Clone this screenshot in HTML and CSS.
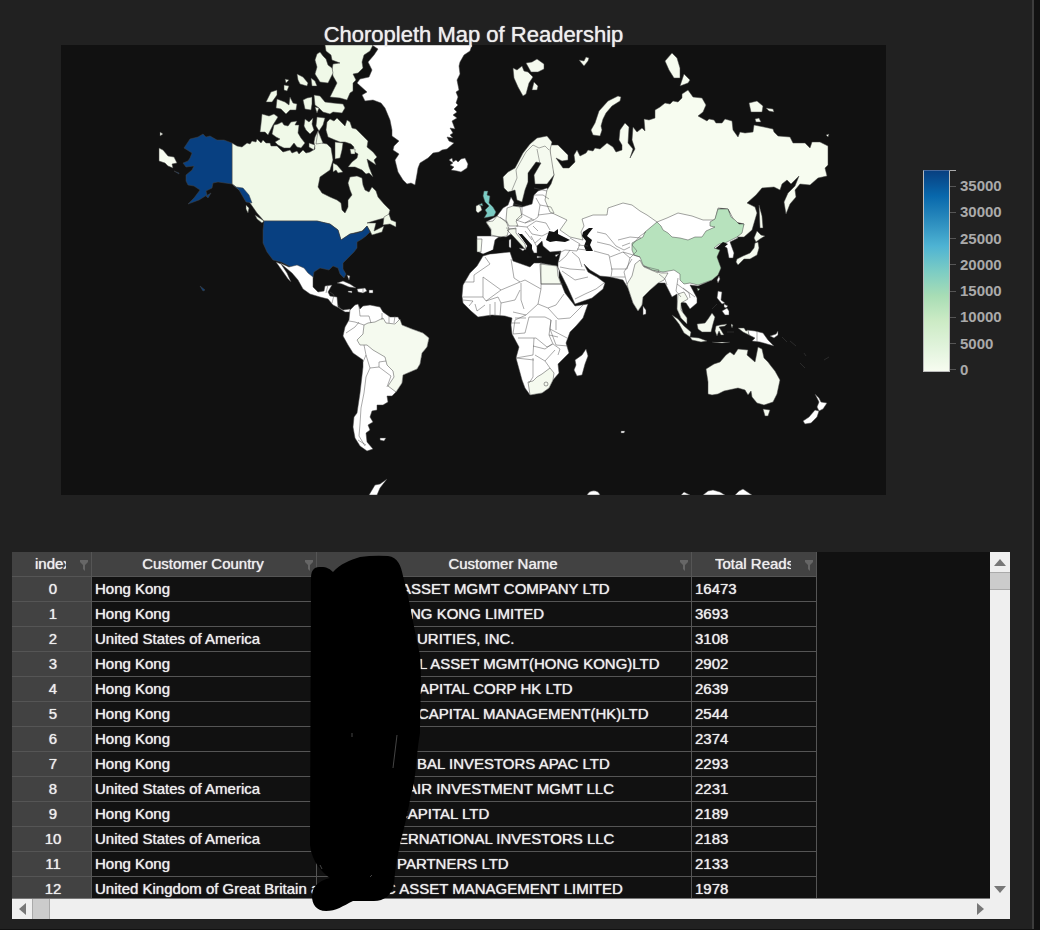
FILE: index.html
```html
<!DOCTYPE html>
<html lang="en">
<head>
<meta charset="utf-8">
<title>Readership</title>
<link rel="stylesheet" href="styles.css">
</head>
<body>
<main class="panel">
<section class="chart">
<div class="plot">
<h1 class="title">Choropleth Map of Readership</h1>
<svg class="map" viewBox="61 45 825 450" role="img" aria-label="World map of readership by country">
<g class="canada">
<path d="M232 143L237 146 242 147 247 143 250 144 252 141 256 142 257 139 261 143 263 140 266 143 270 143 271 146 277 146 283 152 290 150 292 153 297 151 299 154 303 150 306 153 310 152 315 149 314 142 315 137 318 131 320 136 322 143 327 144 331 148 333 160 330 170 320 177 318 187 322 193 330 197 337 200 341 203 342 210 345 213 348 207 348 200 352 195 350 190 348 183 350 177 357 176 362 178 363 185 365 190 369 192 372 187 376 191 378 197 384 204 390 210 388 217 377 220 367 223 376 223 374 231 384 226 382 232 372 235 370 231 367 226 362 231 350 234 341 240 338 230 330 224 317 221 264 221 257 213 250 203 243 193 232 184Z"/>
<path d="M325 45H373L370 51 364 55 362 62 363 68 358 73 353 74 356 80 353 83 353 91 350 93 347 100 340 98 330 97 333 91 337 83 333 76 332 70 333 64 340 63 332 60 331 55 326 51Z"/>
<path d="M320 52L317 54 315 60 317 67 315 74 320 82 328 83 333 73 332 68 328 65 326 59 323 56Z"/>
<path d="M314 95L320 96 325 102 333 103 343 104 345 108 342 113 333 112 330 114 323 112 319 108 315 105Z"/>
<path d="M327 122L330 119 334 121 337 118 340 121 345 126 347 120 350 122 352 128 356 129 360 133 363 136 368 141 367 147 373 152 377 157 374 160 376 165 370 161 367 159 369 167 373 177 369 173 366 174 362 170 355 167 348 167 352 162 357 158 358 154 353 151 354 147 351 144 345 142 340 142 335 140 328 137 326 130Z"/>
<path d="M274 125L278 124 282 122 284 125 288 126 291 122 297 121 295 125 299 125 298 133 301 138 305 143 301 148 297 147 294 143 290 148 284 148 278 145 275 142 280 139 276 137 272 134Z"/>
<path d="M262 114L269 116 274 114 278 117 273 125 268 135 265 132 260 132 261 124Z"/>
<path d="M277 90L271 92 266 102 272 102 277 95ZM277 99L285 102 289 105 290 97 293 103 297 104 296 110 290 110 286 114 281 109 276 108Z"/>
<path d="M297 74L303 77 308 83 307 86 300 84 298 80ZM311 78L315 81 317 86 312 86ZM303 100L307 98 312 97 312 104 311 110 305 109ZM315 107L319 108 317 113ZM305 119L309 122 313 118 312 124 314 130 310 134 306 130 304 126ZM317 117L325 118 323 125 319 131 316 126ZM318 131L323 143 316 144ZM335 142L343 143 342 150 340 158 335 159ZM309 143L315 145 314 150 309 147ZM284 85L289 86 287 91 284 90ZM285 79L289 80 286 83ZM333 163L337 165 343 172 338 173 336 170 333 172ZM350 149L355 149 355 154 351 154ZM384 217L389 214 391 220 396 222 396 227 390 224 383 225Z"/>
<path d="M246 205L249 208 248 213 246 209ZM255 215L264 221 262 223 257 219Z"/>
</g>
<g class="usa">
<path d="M264 221L317 221 330 224 338 230 341 240 350 234 357 233 363 231 367 226 370 232 366 236 362 239 357 242 357 248 354 252 348 258 343 263 343 269 346 274 344 278 340 274 338 268 333 266 329 270 320 268 314 272 313 278 307 273 301 267 293 268 281 262 273 260 267 252 263 243 263 230Z"/>
<path d="M232 143L224 140 217 140 210 136 206 137 203 134 198 137 190 139 184 148 192 153 190 158 188 161 183 163 186 167 194 166 192 170 186 175 186 181 188 185 194 186 200 190 194 198 188 204 199 200 207 195 206 191 212 188 213 183 218 182 225 183 232 184 236 187 243 188 249 195 252 203 246 202 239 190 232 184ZM206 196L211 193 208 198ZM174 171L179 173 179 174ZM200 286L205 290 203 291Z"/>
</g>
<g class="none">
<path d="M276 262L281 264 287 273 291 282 288 279ZM280 263L289 267 297 265 304 268 308 273 313 277 313 287 318 292 324 291 325 286 332 285 328 292 330 296 337 297 338 307 343 310 350 309 350 312 345 312 339 308 333 305 328 299 320 297 310 294 303 289 298 280 292 273Z"/>
<path d="M337 283L343 281 350 284 356 288 349 287 342 284ZM357 289L365 288 367 291 363 293 358 292ZM348 291L352 291 352 293 348 292ZM369 290H373V293H369ZM347 275L350 276 349 280Z"/>
<path d="M350 310L355 305 358 304 360 309 363 306 370 305 380 307 383 312 390 317 398 317 402 325 412 329 423 333 429 338 427 347 422 353 420 364 417 369 410 372 403 375 402 383 396 392 392 396 387 396 388 402 383 405 377 405 377 410 372 411 370 417 373 422 368 425 370 430 366 433 367 442 373 449 367 451 360 446 355 438 353 427 354 417 357 413 360 393 363 367 363 360 353 353 348 345 343 336 345 327 349 320Z"/>
<path d="M380 438H386L384 441 380 440ZM369 495L375 485 380 484 387 479 380 488 377 495Z"/>
<path d="M372 45H472L470 51 464 55 460 62 459 66 460 74 457 80 459 90 456 92 458 97 456 103 458 105 454 109 457 112 453 115 457 118 452 121 455 129 450 128 453 133 450 135 453 138 447 137 449 141 454 143 447 149 442 150 439 152 433 153 428 158 420 163 418 168 417 174 415 185 411 183 407 184 403 180 398 172 395 160 399 154 393 150 394 146 399 141 392 136 392 130 390 120 385 108 381 103 373 100 365 101 362 95 367 92 357 83 360 79 369 77 372 70 368 62 374 55 378 49Z"/>
<path d="M449 160L452 158 453 162 456 160 458 162 461 159 465 158 468 164 467 168 461 172 457 171 451 170 454 167 450 165 453 163Z"/>
<path class="base" d="M508 205L511 197 514 202 513 206 522 207 532 204 534 195 538 191 547 188 560 205 600 200 640 190 690 195 735 215 738 238 730 242 734 253 733 258 729 258 727 248 722 245 713 250 720 270 712 280 698 286 690 285 697 298 697 303 690 309 686 303 680 302 683 313 687 318 687 324 681 318 677 309 677 294 672 297 668 289 665 283 658 283 650 290 643 297 642 305 638 311 633 303 628 288 623 280 610 277 600 276 590 270 584 264 588 272 595 276 597 277 605 283 603 289 592 298 575 304 567 286 558 268 558 263 561 251 550 252 543 246 542 241 537 246 537 253 534 253 528 242 518 233 528 245 525 250 522 245 513 233 506 237 500 236 495 240 493 250 483 254 477 251 477 236 491 236 491 230 486 222 497 216 503 208Z"/>
<path d="M483 256L490 254 510 252 513 261 530 267 534 263 540 263 557 266 559 270 559 278 565 293 575 306 588 304 583 318 576 326 570 332 566 343 569 353 558 364 559 373 553 380 549 388 542 393 530 395 525 388 522 380 516 358 519 347 512 334 511 325 512 318 505 316 492 315 478 317 471 311 463 303 462 296 463 285 470 273 477 266Z"/>
<path d="M586 349L588 356 585 364 582 375 577 376 574 370 576 365 575 360 582 355ZM643 306L646 310 646 314 643 315Z"/>
<path d="M718 291L722 292 721 300 725 303 722 304 717 298ZM722 311L727 308 729 311 729 315 725 315ZM724 304L728 306 726 308 724 307ZM719 276L720 279 718 283 717 280ZM712 309L717 304M747 330L755 331 763 333 768 340 774 346 767 344 760 342 752 341 755 338 749 335ZM770 336L776 334 778 331 778 335 774 338Z"/>
<path d="M782 337L787 342M790 341L796 346M800 363L805 368M824 360L829 357M804 353L806 356"/>
<path d="M815 394L819 398 821 402 827 403 823 409 819 411 817 407 819 402ZM815 410L819 411 817 417 811 423 805 424 803 421 809 417Z"/>
<path d="M587 495C589 490 598 489 600 495ZM681 495L684 492 690 495ZM703 495L708 491 713 490 720 492 725 495ZM735 495L739 491 743 489 752 495ZM621 431L625 431 624 433 621 433Z"/>
</g>
<g class="russia">
<path d="M550 145L558 145 568 155 568 160 562 161 556 158 563 168 569 168 575 162 574 155 577 150 580 156 586 153 588 150 593 151 595 148 600 149 607 143 613 147 616 152 622 150 622 145 619 140 620 130 625 123 629 127 628 143 633 149 630 158 635 149 632 140 633 127 637 132 642 128 645 131 644 119 649 120 655 118 655 110 660 107 665 103 670 104 673 101 678 102 682 98 682 94 688 90 693 97 702 98 706 105 703 112 698 116 707 121 709 119 714 120 716 123 722 123 725 119 732 121 733 130 738 137 740 132 745 133 753 132 754 125 764 127 773 129 774 132 778 136 790 137 793 143 805 143 810 148 812 142 820 142 828 146 828 165 825 168 827 176 818 178 810 185 800 184 795 190 796 197 790 204 786 214 784 202 788 193 795 186 799 176 791 184 787 180 782 184 780 190 774 187 762 188 756 195 747 203 755 207 757 213 752 230 744 237 737 237 744 224 735 222 728 209 718 208 715 220 703 220 692 216 678 213 667 218 657 222 647 215 640 211 632 205 623 203 608 208 607 215 593 215 582 219 584 226 581 232 583 240 570 237 560 230 567 220 550 212 545 200 547 190 551 184 554 175 550 160Z"/>
<path d="M618 96L621 97 620 101 612 106 606 113 603 119 601 126 602 130 600 136 593 135 591 130 595 123 599 111 608 101ZM672 53L677 58 680 68 680 78 674 78 669 70 665 61ZM684 74L690 80 688 83 680 86ZM749 103L757 101 763 106 762 112 751 112ZM766 108L773 109 774 112 769 111ZM755 119L759 118 761 122 756 122ZM826 135L829 134 828 137ZM579 60L584 61 586 57 589 58 588 61 584 66ZM159 148L163 150 168 156 174 157 177 163 172 164 173 168 168 166 165 163 159 161ZM160 132L163 134 160 136ZM759 205L762 216 763 228 760 228Z"/>
</g>
<g class="light">
<path d="M503 177L508 172 515 168 523 153 530 144 537 138 547 136 552 142 550 150 554 175 547 184 535 184 534 175 541 163 536 162 528 173 528 182 525 190 522 202 517 200 515 190 508 192 504 188Z"/>
<path d="M513 68L517 70 522 66 524 71 528 72 533 77 529 83 526 94 523 96 518 87 514 78ZM526 63L532 62 537 59 544 64 544 69 538 72 531 72ZM534 82L538 86 537 90 532 90Z"/>
<path d="M507 208L513 206 520 207 522 217 516 221 518 226 509 226 506 220ZM486 222L493 221 497 216 506 221 509 229 507 236 500 237 491 235 491 229ZM507 230L516 228 516 233 525 244 526 250 513 236ZM477 239H482L481 252H477ZM476 206L480 204 482 210 478 213 476 211Z"/>
<path d="M540 264L557 266 558 276 561 284H541Z"/>
<path d="M364 325L368 323 375 322 383 318 386 323 395 324 400 319 402 325 412 329 423 333 429 338 427 347 422 353 420 364 417 369 410 372 403 375 402 383 396 392 388 386 394 377 393 371 387 365 385 357 373 350 367 345 360 345 357 340 363 334Z"/>
<path d="M533 381L537 377 542 374 550 368 554 373 553 380 549 388 542 393 530 395 528 382Z"/>
<path d="M627 284L632 276 635 264 640 260 643 266 661 273 668 273 664 280 658 283 650 290 643 297 642 305 638 311 633 303 628 288Z"/>
<path d="M737 259L743 256 750 253 754 248 755 243 758 242 759 248 757 255 750 259 744 259 738 265 736 262ZM757 231L761 235 765 236 760 239 756 242 754 238Z"/>
<path d="M706 369L714 364 720 362 726 355 730 352 734 355 738 349 748 350 747 355 755 362 758 347 762 349 764 358 768 362 771 366 775 371 780 380 777 394 773 402 764 405 757 403 752 397 751 391 748 395 745 390 738 388 724 391 718 394 712 395 708 394 708 382ZM763 409L770 410 768 416H765Z"/>
<path d="M672 315L678 319 684 326 691 332 690 337 684 333 679 324ZM697 324L705 323 708 319 712 313 715 317 713 324 711 332 702 332 698 329ZM690 337L699 338 707 341 701 342 692 340ZM716 326L720 325 727 324 725 326 719 327 721 330 724 335 721 335 719 331 717 336 715 331ZM712 342L722 343 730 342M738 328L744 328 746 331 748 330 749 335 743 332ZM731 324L733 325 732 328M727 332H734M678 294L684 292 688 299 681 303 681 310 687 318 687 324 681 318 677 309Z"/>
</g>
<path class="china" d="M657 222L661 226 663 230 668 233 672 237 680 238 688 240 695 237 702 237 706 231 715 227 710 226 710 222 715 219 718 209 728 209 731 217 735 220 739 224 744 224 742 233 737 237 725 243 719 244 714 248 720 250 717 257 721 268 718 275 712 280 698 285 690 283 684 284 680 280 680 274 674 270 663 272 652 270 643 265 640 257 634 255 632 250 632 243 643 237 645 232 651 227ZM697 288L700 289 698 291Z"/>
<path class="uk" d="M484 191L488 191 487 195 490 196 489 203 493 207 496 212 494 216 484 218 487 213 485 210 489 206 485 202 483 196ZM479 205L482 203 483 206Z"/>
<g class="sea">
<path d="M547 237L549 231 554 232 558 229 558 234 570 240 565 242 556 241 550 242 546 240ZM583 232L589 228 593 228 589 233 587 236 592 240 590 245 593 251 586 251 584 246 586 241 582 236ZM716 248L723 242 728 244 722 249ZM484 254L495 249 498 242 506 239 517 247 524 251 528 252 532 259 528 263 515 257 510 251 498 253ZM519 234L522 234 532 245 532 250 528 247Z"/>
</g>
<path class="none" d="M509 240L511 239 511 248 509 247ZM519 248L525 249 523 251ZM537 256L542 257 537 258ZM555 255L559 254 556 257Z"/>
<g class="borders">
<path d="M512 190L517 178 516 170 526 152 533 145 539 148 545 146 549 150M537 149L540 164M534 188L547 191M534 195L543 195 549 199M514 204L522 206 522 214 534 220 538 217 540 205 536 198M540 205L551 207 554 213 538 215M522 214L516 220 525 223 534 220M516 226L527 227 536 221 546 223 550 230M525 223L532 219M527 227L532 234 542 236 548 233M533 226L538 231M525 231L532 240M506 228L516 229M500 217L507 223M501 237L491 236M531 236L537 247M541 238L535 243M570 238L580 244 577 251 565 250 559 253M559 262L566 256 570 250M560 267L570 269 585 270M572 252L579 258 582 267M577 249L587 250M578 245L588 246M594 251L609 255 612 270 611 277M610 257L623 252 630 258 627 269 611 269M623 252L640 257M630 258L637 251 632 245 640 236 646 232M597 232L606 234 616 246 624 250 630 247M597 242L610 245 620 251M618 240L630 237 641 238M622 246L630 243M612 277L625 277M632 259L624 272 627 284M575 299L585 294 596 289 604 283M562 271L575 280 588 277M659 274L665 279 667 285M678 278L676 291 681 297M677 284L689 293 690 298M683 288L695 297M643 266L659 270 658 273 644 267M757 331V342"/>
<path d="M485 257L490 264 474 275M474 275V282H464M483 277L483 297H463M483 277L501 290 486 301 483 297M511 259L514 278 520 282 501 290M520 282L525 280 541 289M541 262V289M541 284H563M521 283L521 300 524 309M541 289L538 304 526 315 513 312M538 304L548 308 556 305 564 294M548 308L558 319 570 318M570 318L583 305M520 290L515 300 501 303 498 297 486 301M501 303L500 316M495 302V316M490 304V317M475 304L477 311 485 305M463 300L473 301 469 306M526 315L515 320 513 334 525 333 529 317M529 317L545 317 551 320 549 335 553 344 547 347 536 338 518 338M551 320L550 329 567 338M550 329L556 345 568 346M556 320V330M549 335L558 337M534 338L533 355 516 358M533 346L545 349 552 344M535 355L545 361 555 350M533 358V377L529 383M545 361L550 368M516 358L534 360M553 344L560 349 558 355M515 318H526M512 323H520"/>
<circle cx="546" cy="384" r="2"/>
<path d="M359 306L360 316 369 316 371 323M382 313L382 320M389 316V323M395 316L394 323M349 321L355 322 364 325M346 333L355 327 359 322M364 345L366 355 363 362M366 355L370 368 379 367 379 362 386 361M379 367L391 376 387 387M370 368L366 377 364 393 361 408 360 424 359 436 365 446M358 440L366 445M328 285L326 293M330 292L334 295 332 303M340 308L338 305M363 288V292"/>
</g>
</svg>
</div>
<div class="scale">
<div class="ramp"></div>
<ol class="ticks"><li>35000</li><li>30000</li><li>25000</li><li>20000</li><li>15000</li><li>10000</li><li>5000</li><li>0</li></ol>
</div>
</section>

<section class="grid">
<div class="view">
<table class="data">
<colgroup><col class="c-index"><col class="c-country"><col class="c-name"><col class="c-reads"></colgroup>
<thead><tr>
<th scope="col"><div class="head"><span class="label">index</span><svg class="filter" viewBox="0 0 8 11"><path d="M0 0H8V2L5 5V11L3 9V5L0 2Z"/></svg></div></th>
<th scope="col"><div class="head"><span class="label">Customer Country</span><svg class="filter" viewBox="0 0 8 11"><path d="M0 0H8V2L5 5V11L3 9V5L0 2Z"/></svg></div></th>
<th scope="col"><div class="head"><span class="label">Customer Name</span><svg class="filter" viewBox="0 0 8 11"><path d="M0 0H8V2L5 5V11L3 9V5L0 2Z"/></svg></div></th>
<th scope="col"><div class="head"><span class="label">Total Reads</span><svg class="filter" viewBox="0 0 8 11"><path d="M0 0H8V2L5 5V11L3 9V5L0 2Z"/></svg></div></th>
</tr></thead>
<tbody>
<tr><th scope="row">0</th><td>Hong Kong</td><td style="padding-left:84px">ASSET MGMT COMPANY LTD</td><td>16473</td></tr>
<tr><th scope="row">1</th><td>Hong Kong</td><td style="padding-left:93px">NG KONG LIMITED</td><td>3693</td></tr>
<tr><th scope="row">2</th><td>United States of America</td><td style="padding-left:100px">URITIES, INC.</td><td>3108</td></tr>
<tr><th scope="row">3</th><td>Hong Kong</td><td style="padding-left:102px">L ASSET MGMT(HONG KONG)LTD</td><td>2902</td></tr>
<tr><th scope="row">4</th><td>Hong Kong</td><td style="padding-left:102px">APITAL CORP HK LTD</td><td>2639</td></tr>
<tr><th scope="row">5</th><td>Hong Kong</td><td style="padding-left:101px">CAPITAL MANAGEMENT(HK)LTD</td><td>2544</td></tr>
<tr><th scope="row">6</th><td>Hong Kong</td><td></td><td>2374</td></tr>
<tr><th scope="row">7</th><td>Hong Kong</td><td style="padding-left:100px">BAL INVESTORS APAC LTD</td><td>2293</td></tr>
<tr><th scope="row">8</th><td>United States of America</td><td style="padding-left:90px">AIR INVESTMENT MGMT LLC</td><td>2231</td></tr>
<tr><th scope="row">9</th><td>Hong Kong</td><td style="padding-left:80px">CAPITAL LTD</td><td>2189</td></tr>
<tr><th scope="row">10</th><td>United States of America</td><td style="padding-left:81px">ERNATIONAL INVESTORS LLC</td><td>2183</td></tr>
<tr><th scope="row">11</th><td>Hong Kong</td><td style="padding-left:80px">PARTNERS LTD</td><td>2133</td></tr>
<tr><th scope="row">12</th><td>United Kingdom of Great Britain and</td><td style="padding-left:68px">C ASSET MANAGEMENT LIMITED</td><td>1978</td></tr>
</tbody>
</table>
</div>
<div class="vbar"><button class="arrow" aria-label="Scroll up"><svg viewBox="0 0 12 7"><path d="M0 7L6 0 12 7Z"/></svg></button><div class="thumb"></div><button class="arrow last" aria-label="Scroll down"><svg viewBox="0 0 12 7"><path d="M0 0H12L6 7Z"/></svg></button></div>
<div class="hbar"><button class="arrow" aria-label="Scroll left"><svg viewBox="0 0 7 12"><path d="M7 0V12L0 6Z"/></svg></button><div class="thumb"></div><button class="arrow last" aria-label="Scroll right"><svg viewBox="0 0 7 12"><path d="M0 0L7 6 0 12Z"/></svg></button></div>
<svg class="marker" viewBox="310 555 112 358" aria-hidden="true">
<path d="M311 578C311 568 316 567 321 567C327 567 330 569 333 572C340 564 350 560 360 557Q374 555 388 556C398 557 401 566 403 576L408 596C413 621 416 637 420 655C422 675 420 712 420 733C416 755 416 782 411 794C406 827 396 851 394 884C392 895 384 901 374 901H353C343 906 336 911 326 911C316 911 312 904 312 896C312 887 318 881 330 878C323 873 312 863 310 845Z"/>
<path class="gap" d="M352 733V737M397 735L393 768M370 877L372 875M320 865L322 869"/>
</svg>
</section>
</main>
</body>
</html>
```
FILE: styles.css
```css
* { box-sizing: border-box; }

body {
  margin: 0;
  background: #111;
  color: #eee;
  font: 15px/24px "Liberation Sans", Arial, sans-serif;
}

.panel {
  margin-right: 6px;
  padding: 25px 22px 10px 12px;
  background: #212121;
  border-right: 2px solid #3c3c3c;
}

.chart {
  display: grid;
  grid-template-columns: 1fr 87px;
  gap: 37px;
  align-items: start;
  padding-left: 49px;
}

.title {
  position: relative;
  margin: 0;
  font-size: 22px;
  font-weight: 400;
  line-height: 20px;
  text-align: center;
  white-space: nowrap;
  text-shadow: 0 0 1px #eee;
}

.map {
  display: block;
  width: 100%;
  background: #111;
}

.map path,
.map circle {
  stroke: #444;
  stroke-width: 0.5;
  stroke-linejoin: round;
}

.none { fill: #fff; }
.canada { fill: #f0f9e8; }
.usa { fill: #084081; }
.russia { fill: #f7fcf0; }
.light { fill: #f5faef; }
.china { fill: #b7e2bd; }
.uk { fill: #7bccc4; }
.sea { fill: #111; }
.map .sea path { stroke: none; }
.borders { fill: none; }
.map .borders path { stroke: #555; }

.scale {
  display: flex;
  margin-top: 145px;
}

.ramp {
  width: 27px;
  height: 202px;
  border: 1px solid #bbb;
  border-top-color: #47699c;
  background: linear-gradient(to top, #f7fcf0, #e0f3db, #ccebc5, #a8ddb5, #7bccc4, #4eb3d3, #2b8cbe, #0868ac, #084081);
}

.ticks {
  display: flex;
  flex-direction: column;
  justify-content: space-between;
  position: relative;
  height: 200px;
  margin: 8px 0 0;
  padding: 0;
  list-style: none;
  color: #aaa;
  font-weight: 700;
  line-height: 16px;
}

/* end mark at the top of the axis */
.ticks::before {
  content: "";
  position: absolute;
  top: -8px;
  left: 0;
  width: 6px;
  height: 1px;
  background: #aaa;
}

.ticks li {
  display: flex;
  align-items: center;
  gap: 4px;
}

.ticks li::before {
  content: "";
  width: 6px;
  height: 1px;
  background: #555;
}

.grid {
  position: relative;
  display: grid;
  grid-template-columns: 1fr 20px;
  grid-template-rows: 347px 20px;
  margin-top: 57px;
}

.view {
  overflow: hidden;
  background: #111;
  border-bottom: 1px solid #777;
}

.data {
  width: 805px;
  table-layout: fixed;
  border-collapse: separate;
  border-spacing: 0;
  text-shadow: 0 0 1px #eee;
}

.c-index { width: 80px; }
.c-country { width: 225px; }
.c-name { width: 375px; }
.c-reads { width: 125px; }

.data th,
.data td {
  height: 25px;
  padding: 0 0 0 3px;
  overflow: hidden;
  border-right: 1px solid #555;
  border-bottom: 1px solid #555;
  font-weight: 400;
  line-height: 24px;
  text-align: left;
  white-space: nowrap;
}

.data th {
  background: #424242;
  text-align: center;
}

.head {
  display: flex;
  align-items: center;
  padding-left: 20px;
}

.label {
  flex: 1;
  overflow: hidden;
}

.filter {
  flex: none;
  width: 8px;
  height: 11px;
  margin: 3px 3px 0 14px;
  fill: #666;
}

.vbar,
.hbar {
  display: flex;
  background: #efefef;
}

.vbar { flex-direction: column; }
.hbar { grid-column: 1 / 3; padding-right: 20px; }

.arrow {
  display: flex;
  align-items: center;
  justify-content: center;
  width: 20px;
  height: 20px;
  padding: 0;
  border: 0;
  background: none;
}

.arrow svg { width: 12px; fill: #777; }
.hbar .arrow svg { width: 7px; }
.vbar .last { margin-top: auto; }
.hbar .last { margin-left: auto; }

.thumb {
  width: 20px;
  height: 18px;
  background: #ccc;
  border: 0 solid #aaa;
  border-width: 1px 0;
}

.hbar .thumb {
  width: 18px;
  height: 20px;
  border-width: 0 1px;
}

.marker {
  position: absolute;
  left: 298px;
  top: 3px;
  width: 112px;
  height: 358px;
  fill: #000;
}

.gap { stroke: #444; fill: none; }
```
